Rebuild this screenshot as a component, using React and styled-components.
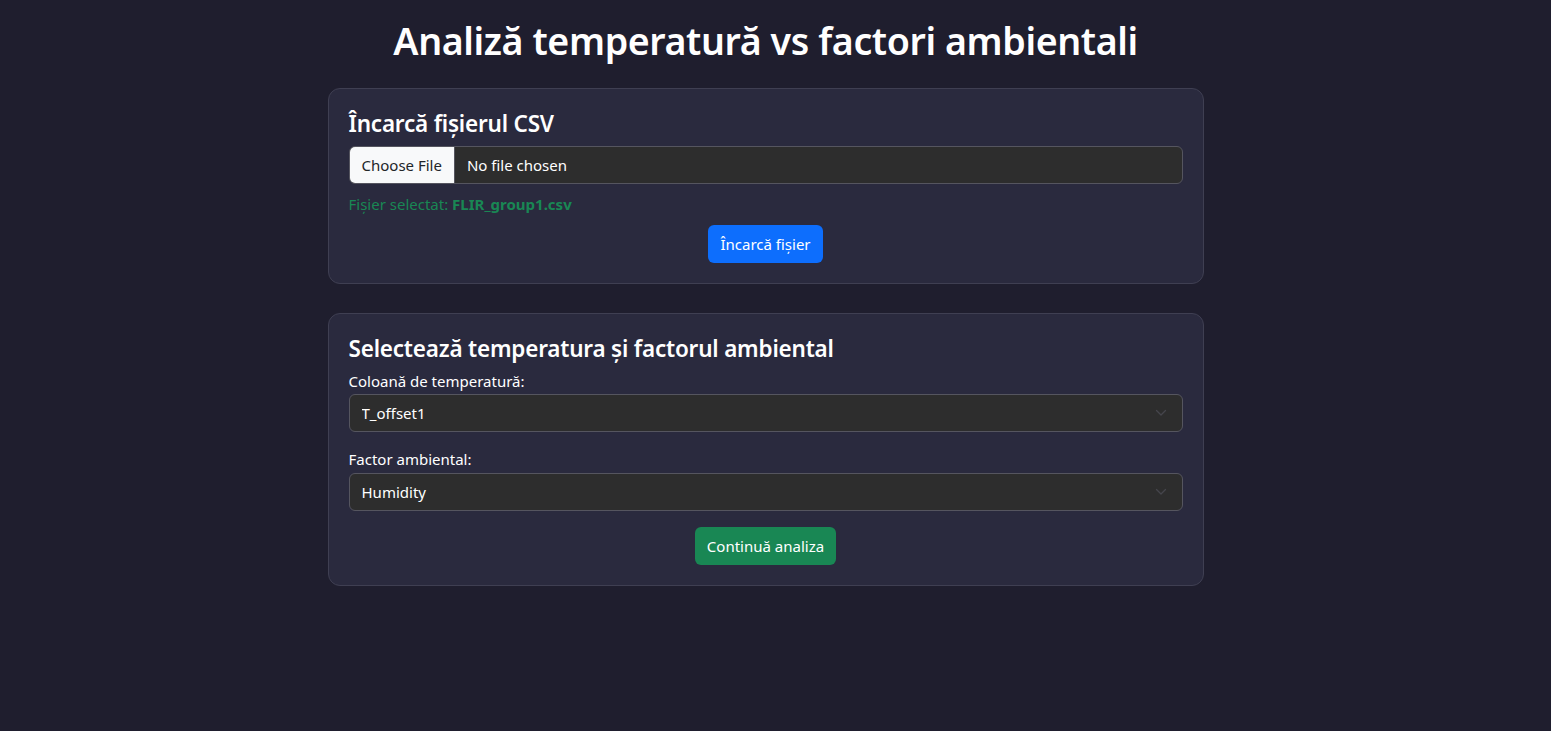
import React, { useState } from 'react';
import styled, { createGlobalStyle } from 'styled-components';

const GlobalStyle = createGlobalStyle`
  body {
    margin: 0;
    background: #1f1e2e;
    color: #ffffff;
    font-family: "Noto Sans", "Open Sans", sans-serif;
    font-size: 15px;
    line-height: 1.5;
  }
  * { box-sizing: border-box; }
`;

const Page = styled.div`
  min-height: 731px;
  padding: 18px 20px 40px 0;
  display: flex;
  flex-direction: column;
  align-items: center;
`;

const Title = styled.h1`
  margin: 0 0 25px;
  font-size: 37.6px;
  font-weight: 600;
  line-height: 1.2;
  letter-spacing: -0.4px;
  text-align: center;
`;

const Card = styled.section`
  width: 876px;
  background: #2a2a3e;
  border: 1px solid #3f3f52;
  border-radius: 12px;
  padding: 20px 20px 20px;
  margin-bottom: 29px;
  display: flex;
  flex-direction: column;
`;

const CardTitle = styled.h4`
  margin: 0 0 8px;
  font-size: 22.5px;
  font-weight: 600;
  line-height: 29px;
  letter-spacing: -0.2px;
`;

const FileInput = styled.input`
  display: block;
  width: 100%;
  height: 38px;
  padding: 0 12px 0 0;
  background: #2d2d2d;
  color: #fff;
  border: 1px solid #55555f;
  border-radius: 6px;
  font-family: inherit;
  font-size: 15px;
  overflow: hidden;

  &::file-selector-button {
    height: 38px;
    margin: -1px 12px 0 0;
    padding: 0 12px;
    background: #f8f9fa;
    color: #212529;
    border: none;
    border-right: 1px solid #55555f;
    font-family: inherit;
    font-size: 15px;
  }
`;

const Selected = styled.p`
  margin: 9px 0 9px;
  color: #198754;
  font-size: 15px;

  strong { font-weight: 700; }
`;

const Actions = styled.div`
  display: flex;
  justify-content: center;
`;

const Button = styled.button`
  height: 38px;
  padding: 0 12px;
  border: none;
  border-radius: 6px;
  background: ${(p) => (p.$variant === 'success' ? '#198754' : '#0d6efd')};
  color: #fff;
  font-family: inherit;
  font-size: 15px;
  cursor: pointer;
`;

const Field = styled.div`
  display: flex;
  flex-direction: column;
  margin-bottom: ${(p) => (p.$last ? '16px' : '17px')};
`;

const Label = styled.label`
  font-size: 15px;
  margin-bottom: 2px;
  line-height: 1.45;
`;

const SelectWrap = styled.div`
  position: relative;
`;

const Select = styled.select`
  appearance: none;
  width: 100%;
  height: 38px;
  padding: 0 36px 0 12px;
  background: #2d2d2d;
  color: #fff;
  border: 1px solid #55555f;
  border-radius: 6px;
  font-family: inherit;
  font-size: 15px;
`;

const Chevron = styled.svg`
  position: absolute;
  right: 16px;
  top: 50%;
  transform: translateY(-50%);
  pointer-events: none;
`;

const ChevronIcon = () => (
  <Chevron width="12" height="8" viewBox="0 0 12 8" fill="none">
    <path d="M1.5 1.5 6 6l4.5-4.5" stroke="#45454c" strokeWidth="1.3" strokeLinecap="round" strokeLinejoin="round" />
  </Chevron>
);

export default function App() {
  const [temp, setTemp] = useState('T_offset1');
  const [factor, setFactor] = useState('Humidity');
  return (
    <>
      <GlobalStyle />
      <Page>
        <Title>Analiză temperatură vs factori ambientali</Title>
        <Card>
          <CardTitle>Încarcă fișierul CSV</CardTitle>
          <FileInput type="file" accept=".csv" />
          <Selected>
            Fișier selectat: <strong>FLIR_group1.csv</strong>
          </Selected>
          <Actions>
            <Button>Încarcă fișier</Button>
          </Actions>
        </Card>
        <Card>
          <CardTitle>Selectează temperatura și factorul ambiental</CardTitle>
          <Field>
            <Label htmlFor="temp">Coloană de temperatură:</Label>
            <SelectWrap>
              <Select id="temp" value={temp} onChange={(e) => setTemp(e.target.value)}>
                <option>T_offset1</option>
                <option>T_offset2</option>
              </Select>
              <ChevronIcon />
            </SelectWrap>
          </Field>
          <Field $last>
            <Label htmlFor="factor">Factor ambiental:</Label>
            <SelectWrap>
              <Select id="factor" value={factor} onChange={(e) => setFactor(e.target.value)}>
                <option>Humidity</option>
                <option>Distance</option>
              </Select>
              <ChevronIcon />
            </SelectWrap>
          </Field>
          <Actions>
            <Button $variant="success">Continuă analiza</Button>
          </Actions>
        </Card>
      </Page>
    </>
  );
}
